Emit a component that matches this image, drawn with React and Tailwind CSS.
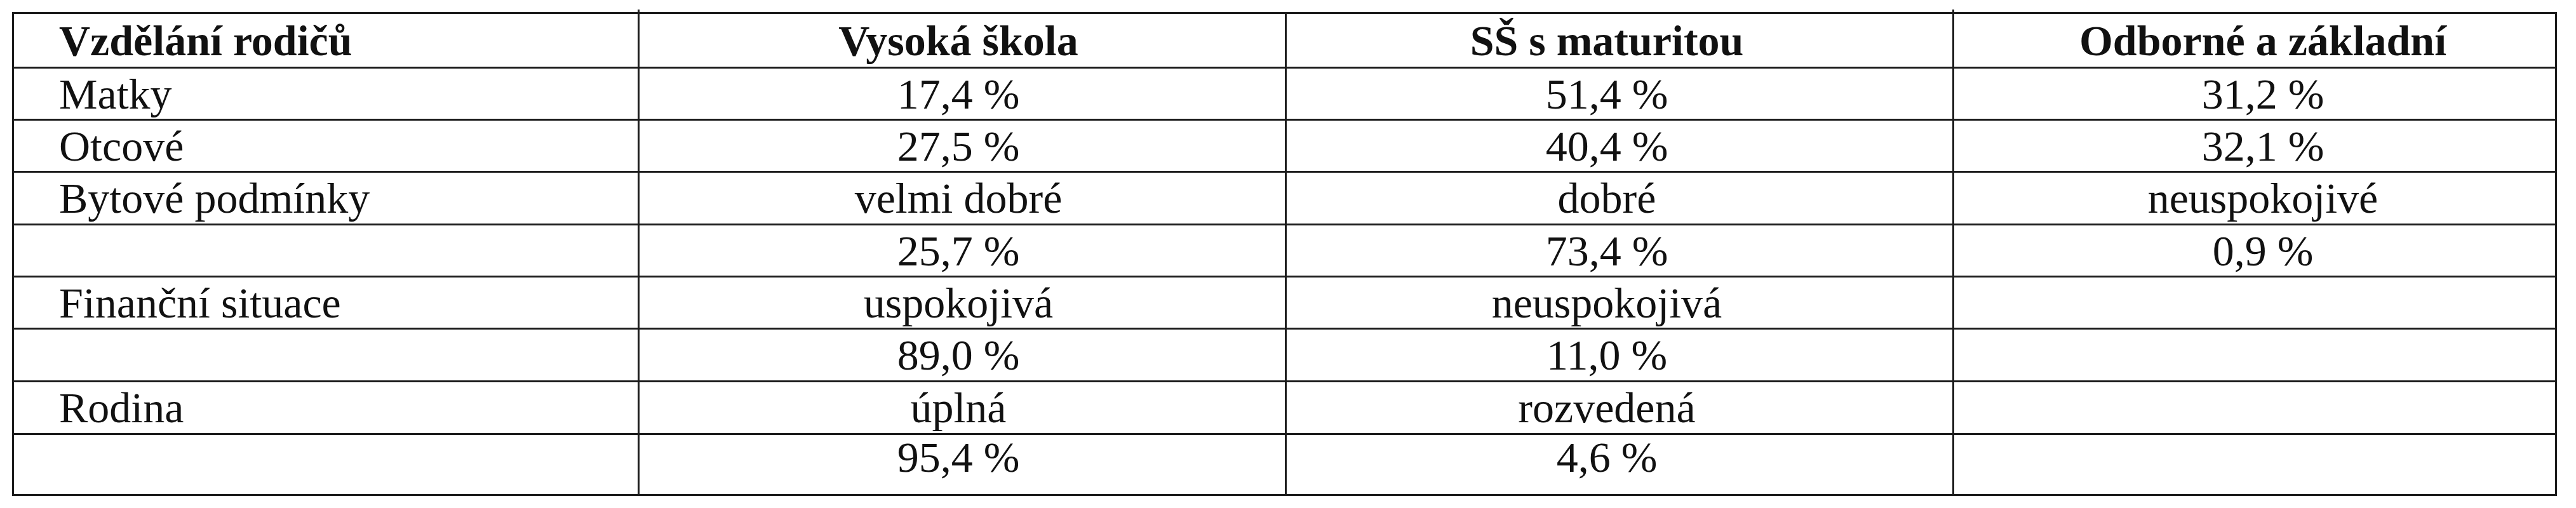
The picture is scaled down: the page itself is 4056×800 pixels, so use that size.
const header = ['Vzdělání rodičů', 'Vysoká škola', 'SŠ s maturitou', 'Odborné a základní'];

const rows = [
  { h: 'h-[79px]', cells: ['Matky', '17,4 %', '51,4 %', '31,2 %'] },
  { h: 'h-[79px]', cells: ['Otcové', '27,5 %', '40,4 %', '32,1 %'] },
  { h: 'h-[80px]', cells: ['Bytové podmínky', 'velmi dobré', 'dobré', 'neuspokojivé'] },
  { h: 'h-[79px]', cells: ['', '25,7 %', '73,4 %', '0,9 %'] },
  { h: 'h-[79px]', cells: ['Finanční situace', 'uspokojivá', 'neuspokojivá', ''] },
  { h: 'h-[80px]', cells: ['', '89,0 %', '11,0 %', ''] },
  { h: 'h-[80px]', cells: ['Rodina', 'úplná', 'rozvedená', ''] },
  { h: 'h-[93px] pb-[23px]', cells: ['', '95,4 %', '4,6 %', ''] },
];

// per-column alignment, nudged to where the text sits in the source table
const colClass = [
  'justify-start pl-[71px]',
  'justify-center pr-[12px]',
  'justify-center pr-[40px]',
  'justify-center pl-[26px]',
];

const Cell = ({ children, col, h, bold, tick }) => (
  <div className={`relative bg-white flex items-center ${h} ${colClass[col]} ${bold ? 'font-bold' : ''}`}>
    {tick && <span className="absolute -top-[7px] -left-[3px] w-[3px] h-[4px] bg-[#1c1c1c]"></span>}
    <span className="whitespace-nowrap">{children}</span>
  </div>
);

const App = () => {
  return (
    <div className="w-[4056px] h-[800px] bg-white pt-[19px] pl-[19px] text-[68px] text-[#111] font-['Liberation_Serif','Times_New_Roman',serif]">
      <div className="grid grid-cols-[982px_1016px_1048px_946px] gap-[3px] p-[3px] bg-[#1c1c1c] w-fit">
        {header.map((t, i) => (
          <Cell key={i} col={i} h="h-[83px]" bold tick={i === 1 || i === 3}>
            {t}
          </Cell>
        ))}
        {rows.map((r, ri) =>
          r.cells.map((t, ci) => (
            <Cell key={`${ri}-${ci}`} col={ci} h={r.h}>
              {t}
            </Cell>
          ))
        )}
      </div>
    </div>
  );
};

export default App;
